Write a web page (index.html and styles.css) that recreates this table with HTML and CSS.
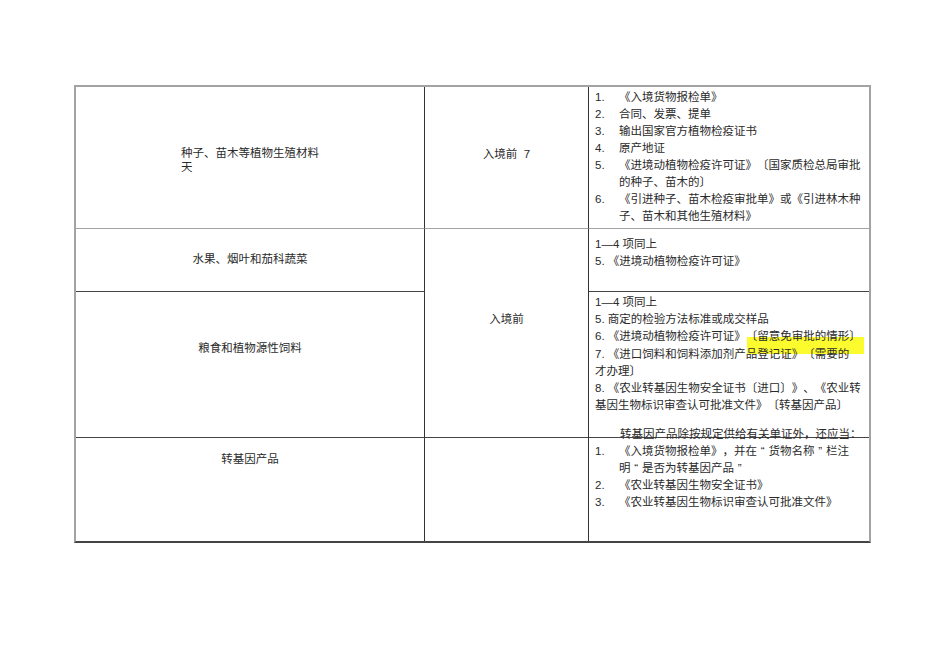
FILE: index.html
```html
<!DOCTYPE html>
<html lang="zh-CN">
<head>
<meta charset="utf-8">
<title>入境植物检疫单证</title>
<link rel="stylesheet" href="styles.css">
</head>
<body>
<div class="page">
  <div class="tbl">
    <div class="cell a1 b-gray"><span class="block">种子、苗木等植物生殖材料<br>天</span></div>
    <div class="cell b1 b-gray">入境前&nbsp;&nbsp;7</div>
    <div class="cell c1 last b-gray">
      <div class="item"><span class="num">1.</span><span class="txt">《入境货物报检单》</span></div>
      <div class="item"><span class="num">2.</span><span class="txt">合同、发票、提单</span></div>
      <div class="item"><span class="num">3.</span><span class="txt">输出国家官方植物检疫证书</span></div>
      <div class="item"><span class="num">4.</span><span class="txt">原产地证</span></div>
      <div class="item"><span class="num">5.</span><span class="txt">《进境动植物检疫许可证》〔国家质检总局审批<br>的种子、苗木的〕</span></div>
      <div class="item"><span class="num">6.</span><span class="txt">《引进种子、苗木检疫审批单》或《引进林木种<br>子、苗木和其他生殖材料》</span></div>
    </div>

    <div class="cell a2">水果、烟叶和茄科蔬菜</div>
    <div class="cell b23">入境前</div>
    <div class="cell c2 last">
      <div class="line"><span class="d">1—4</span> 项同上</div>
      <div class="line"><span class="d">5.</span> 《进境动植物检疫许可证》</div>
    </div>

    <div class="cell a3">粮食和植物源性饲料</div>
    <div class="cell c3 last">
      <div class="hl"></div>
      <div class="line"><span class="d">1—4</span> 项同上</div>
      <div class="line"><span class="d">5.</span> 商定的检验方法标准或成交样品</div>
      <div class="line"><span class="d">6.</span> 《进境动植物检疫许可证》〔留意免审批的情形〕</div>
      <div class="line"><span class="d">7.</span> 《进口饲料和饲料添加剂产品登记证》〔需要的<br>才办理〕</div>
      <div class="line"><span class="d">8.</span> 《农业转基因生物安全证书〔进口〕》、《农业转<br>基因生物标识审查认可批准文件》〔转基因产品〕</div>
      <div class="line note">转基因产品除按规定供给有关单证外，还应当：</div>
    </div>

    <div class="cell a4">转基因产品</div>
    <div class="cell b4"></div>
    <div class="cell c4 last">
      <div class="item"><span class="num">1.</span><span class="txt">《入境货物报检单》，并在<span class="q">“</span>货物名称<span class="q">”</span>栏注<br>明<span class="q">“</span>是否为转基因产品<span class="q">”</span></span></div>
      <div class="item"><span class="num">2.</span><span class="txt">《农业转基因生物安全证书》</span></div>
      <div class="item"><span class="num">3.</span><span class="txt">《农业转基因生物标识审查认可批准文件》</span></div>
    </div>
  </div>
</div>
</body>
</html>
```

FILE: styles.css
```css
* { box-sizing: border-box; }
html, body { margin: 0; padding: 0; }
html { background: #fff; }
body {
  font-family: "Liberation Sans", "Noto Sans CJK SC", sans-serif;
  font-size: 11.5px;
  color: #2a2a2a;
  text-spacing-trim: space-all;
}
.page {
  width: 950px;
  height: 672px;
  padding: 85px 0 0 74px;
}
.tbl {
  display: grid;
  grid-template-columns: 349px 164px 280px;
  grid-template-rows: 142px 63px 146px 103px;
  width: 797px;
  border-top: 2px solid #a3a3a3;
  border-left: 2px solid #a3a3a3;
  border-right: 2px solid #a3a3a3;
  border-bottom: 2px solid #444;
}
.cell {
  border-right: 1px solid #333;
  border-bottom: 1px solid #444;
  white-space: nowrap;
  min-height: 0;
  position: relative;
  z-index: 0;
}
.cell.last { border-right: none; }
.cell.b-gray { border-bottom-color: #a3a3a3; }
.a4, .b4, .c4 { border-bottom: none; }

.a1 { grid-column: 1; grid-row: 1; display: flex; align-items: center; justify-content: center; padding-top: 4px; }
.a1 .block { display: inline-block; text-align: left; line-height: 14px; }
.b1 { grid-column: 2; grid-row: 1; display: flex; align-items: center; justify-content: center; padding-bottom: 9px; }
.c1 { grid-column: 3; grid-row: 1; padding: 2px 0 0 6px; line-height: 17.05px; }

.a2 { grid-column: 1; grid-row: 2; display: flex; align-items: center; justify-content: center; padding-bottom: 4px; }
.b23 { grid-column: 2; grid-row: 2 / span 2; display: flex; align-items: center; justify-content: center; padding-bottom: 30px; }
.c2 { grid-column: 3; grid-row: 2; padding: 7px 0 0 6px; line-height: 17px; }

.a3 { grid-column: 1; grid-row: 3; display: flex; align-items: center; justify-content: center; padding-bottom: 36px; }
.c3 { grid-column: 3; grid-row: 3; padding: 2px 0 0 6px; line-height: 17.2px; }

.a4 { grid-column: 1; grid-row: 4; text-align: center; padding-top: 13px; line-height: 17px; }
.b4 { grid-column: 2; grid-row: 4; }
.c4 { grid-column: 3; grid-row: 4; padding: 5px 0 0 6px; line-height: 17px; }

.item { display: flex; }
.num { width: 24px; flex: none; }
.d { font-family: "Liberation Sans", sans-serif; }
.note { margin-top: 12px; text-indent: 25px; }
.q { display: inline-block; width: 11.5px; text-align: center; text-indent: 0; }

.hl {
  position: absolute;
  left: 158px;
  top: 45px;
  width: 117px;
  height: 17px;
  background: #fbfb2e;
  z-index: -1;
}
```
